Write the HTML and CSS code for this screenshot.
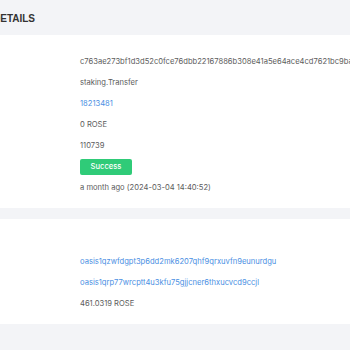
FILE: index.html
```html
<!DOCTYPE html>
<html lang="en">
<head>
    <meta charset="UTF-8">
    <meta name="viewport" content="width=device-width, initial-scale=1.0">
    <title>Transaction Details</title>
    <link rel="stylesheet" href="styles.css">
</head>
<body>
    <div class="page-header">
        <h2 class="title">DETAILS</h2>
    </div>

    <div class="card card-main">
        <div class="row">c763ae273bf1d3d52c0fce76dbb22167886b308e41a5e64ace4cd7621bc9ba</div>
        <div class="row">staking.Transfer</div>
        <div class="row"><a href="#">18213481</a></div>
        <div class="row">0 ROSE</div>
        <div class="row">110739</div>
        <div class="row"><span class="badge">Success</span></div>
        <div class="row">a month ago (2024-03-04 14:40:52)</div>
    </div>

    <div class="gap"></div>

    <div class="card card-transfer">
        <div class="row"><a href="#">oasis1qzwfdgpt3p6dd2mk6207qhf9qrxuvfn9eunurdgu</a></div>
        <div class="row"><a href="#">oasis1qrp77wrcptt4u3kfu75gjjcner6thxucvcd9ccjl</a></div>
        <div class="row">461.0319 ROSE</div>
    </div>
</body>
</html>
```

FILE: styles.css
```css
body { margin: 0; background: #f3f4f7; font-family: Inter, "Noto Sans", sans-serif; overflow: hidden; }
.page-header { height: 35px; display: flex; align-items: center; }
.title { margin: 1px 0 0 -7px; font-family: "Liberation Sans", Arial, sans-serif; font-size: 10px; font-weight: bold; color: #333; }
.card { background: #fff; padding-left: 80px; }
.card-main { padding-top: 16px; padding-bottom: 10px; }
.card-transfer { padding-top: 32px; padding-bottom: 10px; }
.gap { height: 11px; }
.row { height: 21px; display: flex; align-items: center; font-size: 7.6px; color: #5c5c5c; white-space: nowrap; }
.row a { color: #4a8fe3; text-decoration: none; }
.badge { display: inline-flex; align-items: center; justify-content: center; width: 52px; height: 16px; border-radius: 2px; background: #2fcb78; color: #fff; font-weight: 500; }
```
